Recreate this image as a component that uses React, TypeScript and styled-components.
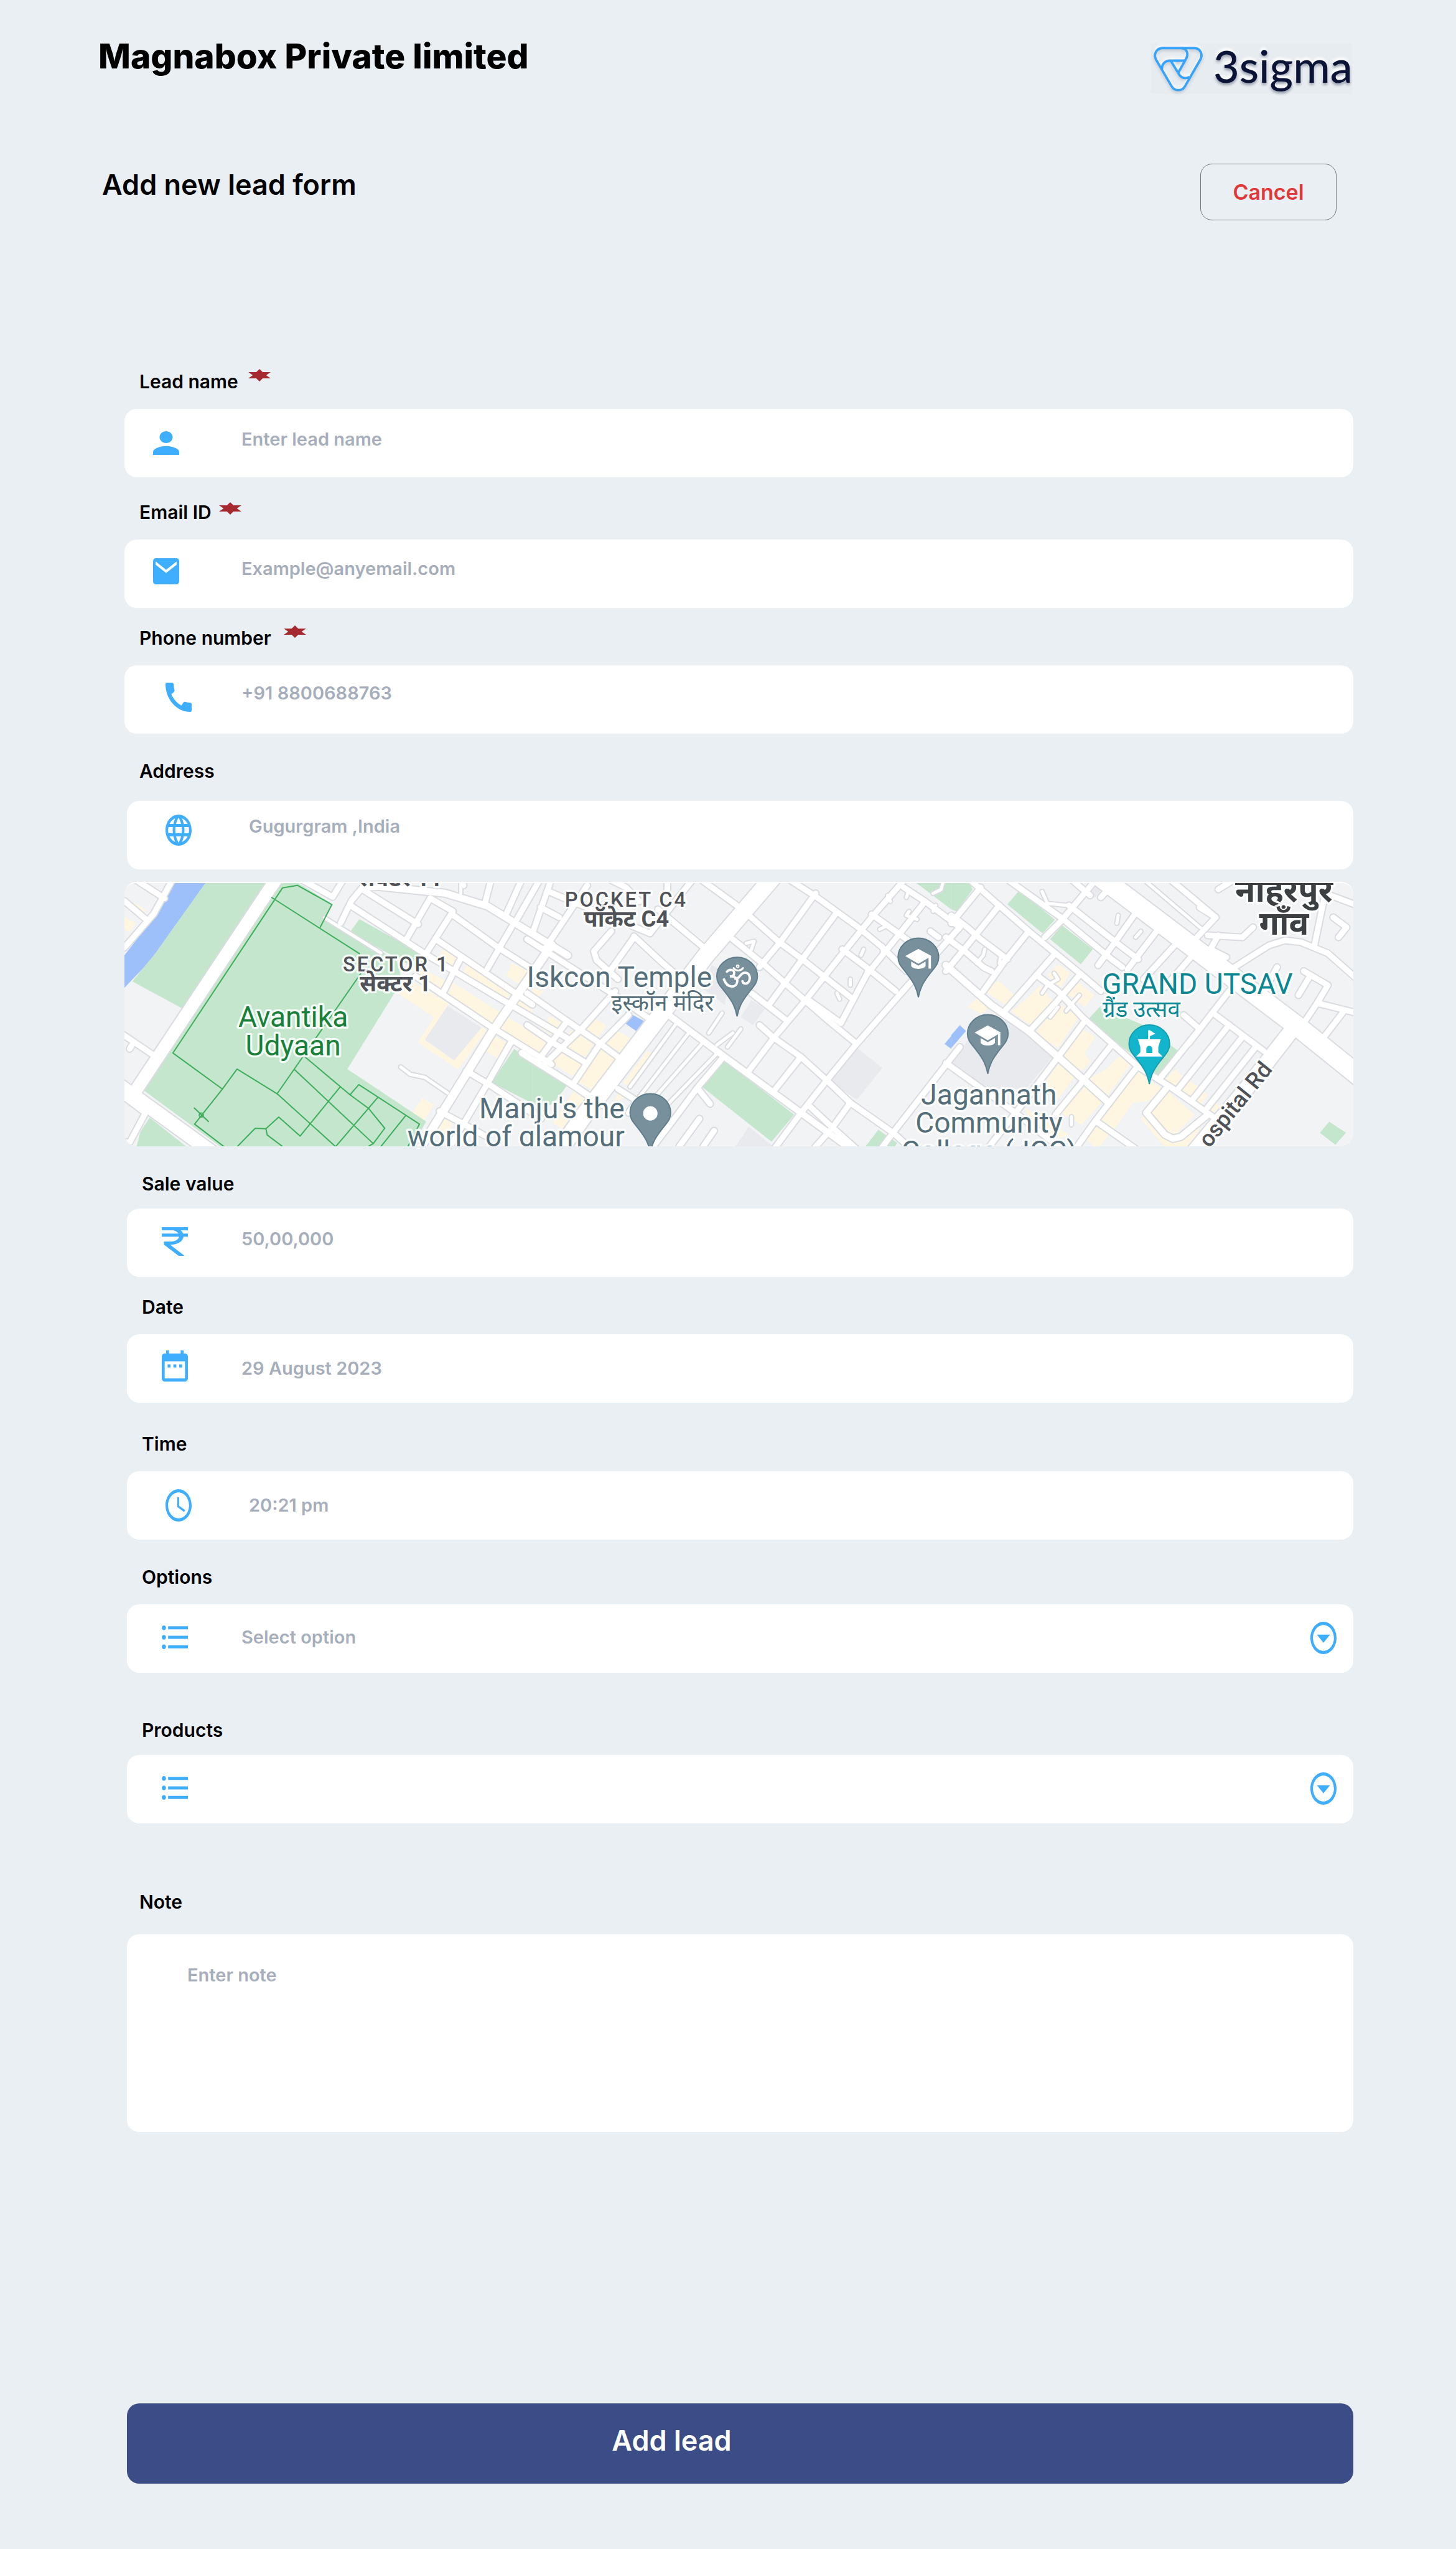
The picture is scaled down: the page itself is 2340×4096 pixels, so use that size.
import React from 'react';
import styled, { createGlobalStyle } from 'styled-components';

const GlobalStyle = createGlobalStyle`
  *, *::before, *::after { box-sizing: border-box; }
  body {
    margin: 0;
    background: #eaeff3;
    color: #000;
    font-family: Inter, "Noto Sans", sans-serif;
  }
`;

/* ---------- page ---------- */

const Page = styled.main`
  min-height: 100vh;
  display: flex;
  flex-direction: column;
  padding-bottom: 104px;
  background: #eaeff3;
`;

const Header = styled.header`
  display: flex;
  justify-content: space-between;
  align-items: flex-start;
  padding: 54px 167px 0 158px;
`;

const Company = styled.h1`
  margin: 0;
  font-size: 55px;
  line-height: 72px;
  font-weight: 800;
`;

const Logo = styled.div`
  display: flex;
  align-items: flex-start;
  gap: 17px;
  width: 323px;
  height: 81px;
  margin-top: 16px;
  padding-left: 4px;
  background: #e7ecf0;
`;

const LogoMark = styled.svg`
  flex: none;
  width: 79px;
  height: 74px;
  margin-top: 4px;
  overflow: visible;
  filter: drop-shadow(0 -4px 2px #fff) drop-shadow(0 3px 2px rgba(40, 50, 80, 0.18));
`;

const LogoText = styled.span`
  font-family: Lato, sans-serif;
  font-weight: 500;
  font-size: 72px;
  line-height: 70px;
  color: #0b1437;
  text-shadow: -1px -4px 4px #fff, 0 3px 4px rgba(11, 20, 55, 0.4);
`;

const TitleRow = styled.div`
  display: flex;
  justify-content: space-between;
  align-items: flex-start;
  padding: 112px 192px 0 164px;
`;

const FormTitle = styled.h2`
  margin: 0;
  padding-top: 4px;
  font-size: 45px;
  line-height: 60px;
  font-weight: 600;
`;

const CancelButton = styled.button`
  width: 219px;
  height: 91px;
  border: 1px solid #76777a;
  border-radius: 19px;
  background: transparent;
  color: #e03838;
  font: 600 34px/44px Inter, sans-serif;
`;

const Form = styled.form`
  display: flex;
  flex-direction: column;
  padding: 243px 165px 0 200px;
`;

/* ---------- fields ---------- */

const Field = styled.div<{ $before: number; $inset?: boolean }>`
  margin-top: ${(p) => p.$before}px;
  margin-left: ${(p) => (p.$inset ? 4 : 0)}px;
`;

const Label = styled.label<{ $gap: number; $indent: number }>`
  display: flex;
  align-items: flex-start;
  width: fit-content;
  margin-bottom: ${(p) => p.$gap}px;
  padding-left: ${(p) => p.$indent}px;
  font-size: 30px;
  line-height: 32px;
  font-weight: 600;
`;

const Star = styled.svg<{ $gap: number; $lift: number }>`
  width: 36px;
  height: 20px;
  margin: ${(p) => -p.$lift}px 0 0 ${(p) => p.$gap}px;
`;

const Box = styled.div`
  position: relative;
  display: flex;
  height: 110px;
  border-radius: 20px;
  background: #fff;
  overflow: hidden;
`;

const IconSlot = styled.span<{ $left: number; $width: number; $lift: number }>`
  flex: 0 0 ${(p) => p.$width}px;
  display: flex;
  align-items: center;
  padding-left: ${(p) => p.$left}px;
  padding-bottom: ${(p) => p.$lift}px;
`;

const Glyph = styled.svg<{ $h: number }>`
  display: block;
  width: 42px;
  height: ${(p) => p.$h}px;
  fill: #40aeff;
`;

const Input = styled.input<{ $lift: number }>`
  flex: 1;
  min-width: 0;
  border: 0;
  outline: 0;
  background: transparent;
  padding: 0 24px ${(p) => p.$lift}px 0;
  color: #3b4252;
  font: 600 29px/36px Inter, sans-serif;
  &::placeholder { color: #a7aebb; opacity: 1; }
`;

const Select = styled.select<{ $lift: number }>`
  flex: 1;
  min-width: 0;
  appearance: none;
  border: 0;
  outline: 0;
  background: transparent;
  padding: 0 96px ${(p) => p.$lift}px 0;
  color: #a7aebb;
  font: 600 29px/36px Inter, sans-serif;
`;

const Arrow = styled.span`
  position: absolute;
  top: 28px;
  right: 27px;
  pointer-events: none;
`;

const Note = styled.textarea`
  display: block;
  width: 100%;
  height: 318px;
  border: 0;
  outline: 0;
  resize: none;
  border-radius: 20px;
  background: #fff;
  padding: 48px 97px;
  font: 600 29px/36px Inter, sans-serif;
  &::placeholder { color: #a7aebb; opacity: 1; }
`;

const Submit = styled.button`
  height: 129px;
  margin: 436px 0 0 4px;
  padding: 0 220px 10px 0;
  border: 0;
  border-radius: 20px;
  background: #3c4c86;
  color: #fff;
  font: 600 45px/60px Inter, sans-serif;
`;

/* ---------- icons ---------- */

type IconDef = { box: string; h: number; d: string };

const icons: Record<string, IconDef> = {
  person: {
    box: '4 4 16 16',
    h: 38,
    d: 'M12 12c2.21 0 4-1.79 4-4s-1.79-4-4-4-4 1.79-4 4 1.79 4 4 4zm0 2c-2.67 0-8 1.34-8 4v2h16v-2c0-2.66-5.33-4-8-4z',
  },
  mail: {
    box: '2 4 20 16',
    h: 42,
    d: 'M20 4H4c-1.1 0-1.99.9-1.99 2L2 18c0 1.1.9 2 2 2h16c1.1 0 2-.9 2-2V6c0-1.1-.9-2-2-2zm0 4l-8 5-8-5V6l8 5 8-5v2z',
  },
  phone: {
    box: '3 3 18 18',
    h: 47,
    d: 'M20.01 15.38c-1.23 0-2.42-.2-3.53-.56-.35-.12-.74-.03-1.01.24l-1.57 1.97c-2.83-1.35-5.48-3.9-6.89-6.83l1.95-1.66c.27-.28.35-.67.24-1.02-.37-1.11-.56-2.3-.56-3.53 0-.54-.45-.99-.99-.99H4.19C3.65 3 3 3.24 3 3.99 3 13.28 10.73 21 20.01 21c.71 0 .99-.63.99-1.18v-3.45c0-.54-.45-.99-.99-.99z',
  },
  globe: {
    box: '2 2 20 20',
    h: 50,
    d: 'M11.99 2C6.47 2 2 6.48 2 12s4.47 10 9.99 10C17.52 22 22 17.52 22 12S17.52 2 11.99 2zm6.93 6h-2.95c-.32-1.25-.78-2.45-1.38-3.56 1.84.63 3.37 1.91 4.33 3.56zM12 4.04c.83 1.2 1.48 2.53 1.91 3.96h-3.82c.43-1.43 1.08-2.76 1.91-3.96zM4.26 14C4.1 13.36 4 12.69 4 12s.1-1.36.26-2h3.38c-.08.66-.14 1.32-.14 2 0 .68.06 1.34.14 2H4.26zm.82 2h2.95c.32 1.25.78 2.45 1.38 3.56-1.84-.63-3.37-1.9-4.33-3.56zm2.95-8H5.08c.96-1.66 2.49-2.93 4.33-3.56C8.81 5.55 8.35 6.75 8.03 8zM12 19.96c-.83-1.2-1.48-2.53-1.91-3.96h3.82c-.43 1.43-1.08 2.76-1.91 3.96zM14.34 14H9.66c-.09-.66-.16-1.32-.16-2 0-.68.07-1.35.16-2h4.68c.09.65.16 1.32.16 2 0 .68-.07 1.34-.16 2zm.25 5.56c.6-1.11 1.06-2.31 1.38-3.56h2.95c-.96 1.65-2.49 2.93-4.33 3.56zM16.36 14c.08-.66.14-1.32.14-2 0-.68-.06-1.34-.14-2h3.38c.16.64.26 1.31.26 2s-.1 1.36-.26 2h-3.38z',
  },
  rupee: {
    box: '6 3 12 18',
    h: 46,
    d: 'M13.66 7c-.56-1.18-1.76-2-3.16-2H6V3h12v2h-3.26c.48.58.84 1.26 1.05 2H18v2h-2.02c-.25 2.8-2.61 5-5.48 5h-.73l6.73 7h-2.77L7 14v-2h3.5c1.76 0 3.22-1.3 3.46-3H6V7h7.66z',
  },
  calendar: {
    box: '3 2 18 20',
    h: 50,
    d: 'M9 11H7v2h2v-2zm4 0h-2v2h2v-2zm4 0h-2v2h2v-2zm2-7h-1V2h-2v2H8V2H6v2H5c-1.11 0-1.99.9-1.99 2L3 20c0 1.1.89 2 2 2h14c1.1 0 2-.9 2-2V6c0-1.1-.9-2-2-2zm0 16H5V9h14v11z',
  },
  clock: {
    box: '2 2 20 20',
    h: 52,
    d: 'M11.99 2C6.47 2 2 6.48 2 12s4.47 10 9.99 10C17.52 22 22 17.52 22 12S17.52 2 11.99 2zM12 20c-4.42 0-8-3.58-8-8s3.58-8 8-8 8 3.58 8 8-3.58 8-8 8zm.5-13H11v6l5.25 3.15.75-1.23-4.5-2.67z',
  },
  list: {
    box: '2.5 4.5 18.5 15',
    h: 38,
    d: 'M4 10.5c-.83 0-1.5.67-1.5 1.5s.67 1.5 1.5 1.5 1.5-.67 1.5-1.5-.67-1.5-1.5-1.5zm0-6c-.83 0-1.5.67-1.5 1.5S3.17 7.5 4 7.5 5.5 6.83 5.5 6 4.83 4.5 4 4.5zm0 12c-.83 0-1.5.68-1.5 1.5s.68 1.5 1.5 1.5 1.5-.68 1.5-1.5-.67-1.5-1.5-1.5zM7 19h14v-2H7v2zm0-6h14v-2H7v2zm0-8v2h14V5H7z',
  },
  dropdown: {
    box: '2 2 20 20',
    h: 52,
    d: 'M12 4c4.41 0 8 3.59 8 8s-3.59 8-8 8-8-3.59-8-8 3.59-8 8-8m0-2C6.48 2 2 6.48 2 12s4.48 10 10 10 10-4.48 10-10S17.52 2 12 2zM7 10h10l-5 5z',
  },
};

const Icon = ({ name }: { name: string }) => {
  const icon = icons[name];
  return (
    <Glyph $h={icon.h} viewBox={icon.box} preserveAspectRatio="none" aria-hidden="true">
      <path d={icon.d} />
    </Glyph>
  );
};

const Required = ({ gap, lift }: { gap: number; lift: number }) => (
  <Star $gap={gap} $lift={lift} viewBox="0 0 84 48" preserveAspectRatio="none" role="img" aria-label="required">
    <path fill="#a42a2f" d="M42 0L54 12L84 12L67 24L84 36L54 36L42 48L30 36L0 36L17 24L0 12L30 12Z" />
  </Star>
);

/* ---------- map ---------- */

const MapFrame = styled.div`
  height: 425px;
  margin-top: 20px;
  border-top: 2px solid #fff;
  border-radius: 20px;
  overflow: hidden;
`;

const MapSvg = styled.svg`
  display: block;
  width: 100%;
  height: 423px;
  background: #f1f3f4;

  text {
    font-family: Roboto, "Noto Sans", sans-serif;
    font-size: 48px;
    paint-order: stroke;
    stroke: #fff;
    stroke-opacity: 0.85;
    stroke-width: 7px;
    stroke-linejoin: round;
  }
  .small { font-size: 38px; }
  .area { font-size: 34px; letter-spacing: 3px; }
  .village { font-size: 55px; }
`;

const Road = styled.polyline<{ $w: number; $c: string }>`
  fill: none;
  stroke: ${(p) => p.$c};
  stroke-width: ${(p) => p.$w}px;
  stroke-linejoin: round;
  stroke-linecap: round;
  vector-effect: non-scaling-stroke;
`;

type Tile = {
  at: string;
  green: string[];
  blue: string[];
  grey: string[];
  yellow: string[];
  roads: string[];
  lanes: string[];
  major: [number, string][];
};

const tiles: Tile[] = [
  {
    at: 'translate(190 1250) scale(0.4464 0.4337)',
    green: [
      '340,500 595,500 258,1005 70,900 150,800',
      '640,500 690,521 815,600 790,655 1060,820 1080,900 1045,955 875,1238 1170,1440 1105,1560 430,1560 110,1318',
      '920,660 1190,815 1130,850 885,710',
      '135,1425 300,1560 80,1560 100,1480',
      '1500,1160 1568,1210 1568,1370 1415,1290',
    ],
    blue: ['240,500 358,500 150,800 110,850 40,925 40,800 160,640'],
    grey: ['1250,995 1380,1080 1300,1190 1265,1215 1160,1130'],
    yellow: [
      '75,595 120,625 105,650 60,620',
      '40,650 82,675 60,710 40,700',
      '1240,770 1300,810 1270,870 1200,830',
      '1330,820 1500,920 1460,990 1295,890',
      '1270,905 1450,1020 1420,1085 1250,960',
      '1150,850 1250,900 1225,935 1140,890',
      '1085,880 1255,985 1165,1125 1275,1205 1380,1075 1395,1090 1290,1240 1140,1135 1200,1040 1070,950',
      '1490,830 1550,860 1520,910 1470,880',
      '1510,935 1568,970 1568,1030 1485,1000',
      '1470,1035 1568,1095 1568,1170 1440,1100',
      '1425,1110 1475,1140 1440,1200 1390,1165',
      '1155,1350 1200,1375 1160,1440 1120,1405',
      '1220,1420 1270,1450 1240,1500 1190,1480',
    ],
    roads: [
      '235,480 150,640 40,770',
      '40,590 120,660',
      '70,500 190,580',
      '20,1095 150,1185',
      '60,1160 75,1135',
      '120,1405 60,1520 20,1520',
      '110,1400 20,1330',
      '690,500 820,575 870,490',
      '850,675 890,590 930,540 1020,535',
      '930,545 1140,680',
      '890,610 1160,790 1420,950 1700,1120',
      '1185,580 1095,740',
      '1185,580 1270,630 1165,800',
      '1265,640 1440,770 1640,900',
      '1210,740 1568,990',
      '1490,690 1400,850',
      '1300,810 1235,940',
      '1310,530 1290,490',
      '1390,600 1420,480',
      '1470,640 1540,480',
      '1510,660 1600,500',
      '1130,880 1420,1080 1640,1220',
      '1320,1245 1410,1300 1600,1430',
      '1220,1400 1400,1500',
      '1490,1130 1390,1310 1260,1536',
    ],
    lanes: ['1075,1230 1110,1258 1165,1270 1250,1330', '790,655 1000,790', '1300,560 1300,500'],
    major: [
      [20, '625,480 80,1325'],
      [22, '20,1300 370,1560'],
      [11, '1000,535 1240,560 1400,610 1700,800'],
      [13, '1640,760 1420,1090 1150,1540'],
    ],
  },
  {
    at: 'translate(890 1450) scale(0.4464 0.3333)',
    green: [
      '715,965 980,1240 895,1375 635,1100',
      '1420,60 1568,60 1568,210',
      '1295,1315 1365,1380 1350,1420 1235,1420',
      '0,975 128,1095 80,1180 0,1240',
    ],
    blue: ['350,722 418,770 388,820 330,765', '1568,845 1543,885 1568,910'],
    grey: [
      '1215,905 1310,1005 1215,1165 1110,1070',
      '670,490 740,530 720,690 640,610',
      '820,665 870,710 825,790 780,750',
      '810,1300 900,1398 760,1398',
    ],
    yellow: [
      '65,745 115,785 85,850 30,805',
      '225,745 278,795 245,850 195,800',
      '310,812 370,860 338,935 272,880',
      '145,815 228,885 198,950 108,880',
      '0,835 68,890 38,950 0,920',
      '95,918 185,990 155,1048 62,975',
      '260,912 318,960 230,1120 172,1075',
      '430,920 448,935 358,1095 340,1080',
      '155,1120 195,1160 110,1310 75,1280',
      '325,1120 345,1150 300,1190',
      '0,605 40,620 20,650 0,635',
    ],
    roads: [
      '620,50 780,205',
      '950,50 1060,145 1220,300 1310,400 1400,520',
      '810,240 920,370 1010,460 1095,550 1200,660',
      '750,360 870,490 950,585 1110,770 1210,880',
      '820,630 945,760',
      '850,790 900,850 1005,950 1100,1065 1190,1180 1350,1330 1400,1390',
      '1270,235 1370,330 1440,400',
      '1390,100 1470,170 1600,300',
      '1160,410 1250,500 1360,620',
      '1040,670 1155,780',
      '1060,130 930,370 850,500',
      '1140,225 1010,460 890,680',
      '1400,50 1270,250 1150,450 1020,670 900,860 810,1020',
      '1470,170 1370,340 1250,540 1155,780',
      '1005,950 910,1110',
      '1600,300 1400,600 1210,890 1100,1070 1000,1240 900,1420',
      '1190,1180 1120,1310 1060,1400',
      '1040,1200 1120,1300 1220,1420',
      '1600,900 1350,1330 1300,1420',
      '715,950 620,1100 520,1280 440,1420',
      '620,1110 665,1185',
      '625,1260 550,1398',
      '680,1320 640,1398',
      '70,60 0,330',
      '205,90 50,400',
      '60,120 130,160 440,330',
      '30,200 100,250',
      '-20,360 50,420 190,540 320,650 450,770',
      '380,345 480,470 600,610',
      '295,320 230,420 240,465 320,560',
      '600,60 440,330',
      '470,210 640,400',
      '380,350 290,520',
      '-20,630 130,770 240,870 340,970',
      '-20,790 90,890 200,980',
      '310,620 190,800 50,980',
      '130,770 20,970',
      '360,740 250,890 150,1090',
      '320,1110 390,1170 360,1230',
      '1490,320 1520,350',
      '290,60 350,100 400,170',
      '505,60 505,110',
    ],
    lanes: [
      '545,770 365,1100',
      '590,820 400,1150',
      '640,875 440,1180',
      '700,920 490,1210',
      '750,830 690,890',
      '780,810 730,900',
      '710,730 660,830',
      '800,380 830,370 820,410',
      '1300,310 1330,290',
      '1230,440 1240,410',
      '1190,590 1190,560',
      '1150,660 1140,630',
      '1250,550 1250,520',
      '1310,420 1310,390',
      '1410,220 1400,240 1440,260',
      '1400,150 1410,110',
      '1340,170 1330,140',
      '1500,220 1510,190',
      '1540,60 1530,110 1500,130',
    ],
    major: [
      [27, '900,50 650,440 200,1230 100,1420'],
      [10, '510,740 720,950 1000,1225 1220,1440'],
      [10, '-40,930 150,1090 260,1190'],
    ],
  },
  {
    at: 'translate(1590 1450) scale(0.4464 0.3333)',
    green: [
      '0,60 60,60 80,110 20,220 0,210',
      '255,115 388,262 342,330 210,185',
      '415,290 530,410 485,485 370,360',
      '555,700 720,790 850,920 775,1040 510,765',
      '1415,1275 1478,1330 1438,1390 1380,1330',
    ],
    blue: ['32,790 55,820 0,905 0,840'],
    grey: ['215,760 382,945 280,1110 140,1110 0,985 80,830', '540,80 570,100 540,150 520,120'],
    yellow: [
      '175,565 235,640 205,690 130,625',
      '400,485 445,530 410,600 360,540',
      '335,590 365,650 380,670 295,790 225,720 280,660',
      '100,650 145,695 115,735 60,700',
      '470,570 535,640 500,700 430,630',
      '400,680 480,745 400,905 315,830',
      '490,810 540,850 500,930 520,975 490,1020 415,955',
      '400,985 465,1045 395,1170 345,1090',
      '630,945 670,990 575,1160 515,1060 580,1010',
      '695,1020 790,1110 740,1170 680,1180 605,1320 555,1250',
      '500,1100 570,1165 490,1290 410,1230',
      '840,1010 865,1050 835,1100 800,1065',
      '890,1065 960,1140 925,1210 850,1130',
      '980,1170 1010,1200 970,1240 950,1225',
      '810,1120 910,1240 835,1345 745,1250',
      '735,1180 710,1260 810,1420 885,1420 940,1280 840,1370',
      '270,1200 440,1340 400,1360 300,1280',
      '545,1285 590,1340 545,1420 500,1350',
    ],
    roads: [
      '60,50 170,180 290,320 390,430 490,540 560,620',
      '-20,350 60,430 120,500 150,520',
      '0,240 60,300 110,360 210,460',
      '320,540 400,620 490,750 600,880 700,1000 820,1100 980,1250',
      '200,50 410,250 600,460 640,500',
      '440,190 640,400 700,460',
      '110,100 0,280',
      '180,190 60,390 -20,520',
      '290,320 200,470 120,620',
      '530,80 410,270 350,350',
      '390,430 200,720',
      '480,540 390,680 300,810',
      '700,210 610,380 550,490',
      '780,300 660,510',
      '850,370 720,560',
      '910,430 800,600',
      '500,770 400,950 270,1180 130,1420',
      '600,890 500,1060 390,1240',
      '690,1010 540,1270 460,1420',
      '-20,980 250,1240 420,1420',
      '540,1270 700,1420',
      '870,740 930,810 780,1060',
      '1040,620 890,880',
      '990,740 1170,920',
      '1040,790 850,1110',
      '1090,850 900,1170',
      '1140,900 950,1220',
      '450,60 520,140',
      '820,60 990,250 920,350',
      '1000,110 1060,60',
      '990,250 930,200',
      '960,340 1090,350 1130,300',
      '1000,340 970,410 1030,450',
      '1060,500 1190,390 1250,365 1310,375 1410,430 1520,560',
      '1360,390 1400,130 1520,190',
      '1320,520 1410,590 1370,680 1520,730',
      '1380,660 1310,800',
      '1345,540 1300,640',
      '1220,500 1170,620',
      '1470,720 1390,860',
      '1430,250 1480,300 1450,350',
      '620,60 560,150',
    ],
    lanes: [
      '95,480 120,440 125,410',
      '180,480 185,440',
      '340,630 360,590 400,560 385,530',
      '430,720 460,670 480,640',
      '370,750 400,700',
      '620,280 625,240',
      '690,350 710,320',
      '450,1250 450,1290',
      '340,120 360,180 430,190',
      '720,60 940,310',
    ],
    major: [
      [31, '560,50 1290,790 1540,1060'],
      [24, '1290,790 1110,1100 900,1440'],
      [11, '-20,490 150,690 290,820 400,950 500,1070 590,1180'],
      [10, '810,1100 730,1230 800,1340 830,1360 860,1350 960,1240'],
    ],
  },
];

const parkPaths = [
  '688,530 632,540 222,1176 407,1315 462,1238 612,1333 845,1550',
  '592,577 920,793',
  '688,530 817,604 773,692',
  '925,870 612,1333',
  '715,1190 885,1337 918,1298 1145,1450 1095,1550',
  '407,1315 303,1450 430,1550',
  '302,1388 355,1440',
  '677,1240 972,1525',
  '848,1307 698,1496 618,1423 570,1468 575,1492 650,1550',
  '570,1468 530,1466 450,1550',
  '885,1337 955,1390 1015,1466 972,1525 930,1550',
  '990,1346 820,1550',
  '1093,1418 990,1550',
];

const PIN = 'M0 0C-3 -16 -8 -25 -18 -38C-28 -51 -34 -56 -34 -67A34 32 0 0 1 34 -67C34 -56 28 -51 18 -38C8 -25 3 -16 0 0Z';

const Pin = ({ x, y, teal, children }: { x: number; y: number; teal?: boolean; children: React.ReactNode }) => (
  <g transform={`translate(${x} ${y})`}>
    <path d={PIN} fill={teal ? '#12b5cb' : '#78909c'} stroke={teal ? '#129eaf' : '#607d8b'} strokeWidth="2" />
    <g transform="translate(0 -66)">{children}</g>
  </g>
);

const Cap = () => (
  <g fill="#fff">
    <path d="M0 -15L-22 -3L0 10L22 -3Z" />
    <path d="M-12 6V14C-8 20 8 20 12 14V6L0 13Z" />
    <path d="M17 -2H21V18H17Z" />
  </g>
);

const Om = () => (
  <g fill="none" stroke="#fff" strokeWidth="4" strokeLinecap="round">
    <path d="M-17 -9C-12 -14 -4 -12 -5 -6C-5 -2 -9 -1 -12 -1C-4 -2 2 3 0 9C-2 18 -16 20 -22 4" />
    <path d="M-3 3C4 4 5 -6 12 -7C20 -8 23 0 20 7C17 13 10 12 9 7" />
    <path d="M-6 -15C-1 -9 6 -10 10 -15" strokeWidth="3" />
    <circle cx="1" cy="-18" r="1" />
  </g>
);

const Castle = () => (
  <g fill="#fff">
    <path d="M-2 -24H1L10 -18L1 -14V-9H-2Z" />
    <path d="M-19 -9H19L15 4V13L22 20H-22L-15 13V4Z" />
    <path d="M-5 14V7A5 5 0 0 1 5 7V14Z" fill="#12b5cb" />
  </g>
);

const CityMap = () => (
  <MapFrame>
    <MapSvg viewBox="208 1476 2054 440" preserveAspectRatio="xMidYMid slice" role="img" aria-label="Map of the address">
      {tiles.map((t) => (
        <g key={t.at} transform={t.at}>
          {t.grey.map((p) => <polygon key={p} points={p} fill="#e8eaed" />)}
          {t.yellow.map((p) => <polygon key={p} points={p} fill="#fef6e0" />)}
          {t.green.map((p) => <polygon key={p} points={p} fill="#c3e6cd" />)}
          {t.blue.map((p) => <polygon key={p} points={p} fill="#9dc0fa" />)}
        </g>
      ))}
      {tiles.map((t) => (
        <g key={t.at} transform={t.at}>
          {t.lanes.map((p) => <Road key={p} points={p} $w={9} $c="#dadce0" />)}
          {t.roads.map((p) => <Road key={p} points={p} $w={13} $c="#dadce0" />)}
          {t.major.map(([w, p]) => <Road key={p} points={p} $w={w + 4} $c="#dadce0" />)}
        </g>
      ))}
      {tiles.map((t) => (
        <g key={t.at} transform={t.at}>
          {t.lanes.map((p) => <Road key={p} points={p} $w={5} $c="#fff" />)}
          {t.roads.map((p) => <Road key={p} points={p} $w={9} $c="#fff" />)}
          {t.major.map(([w, p]) => <Road key={p} points={p} $w={w} $c="#fff" />)}
        </g>
      ))}
      <g transform={tiles[0].at}>
        {parkPaths.map((p) => <Road key={p} points={p} $w={2} $c="#3fae5c" />)}
        <circle cx="328" cy="1415" r="8" fill="none" stroke="#3fae5c" strokeWidth="4" />
      </g>

      <g fill="#4f5257" fontWeight="500">
        <text className="area" x="944" y="1516">POCKET C4</text>
        <text className="area" x="573" y="1624">SECTOR 1</text>
        <text className="small" x="2128" y="1788" textAnchor="end" transform="rotate(-51 2128 1788)">ospital Rd</text>
      </g>
      <g fill="#4f5257" fontWeight="700" textAnchor="middle">
        <text className="small" x="1047" y="1549">पॉकेट C4</text>
        <text className="small" x="661" y="1657">सेक्टर 1</text>
        <text className="small" x="669" y="1481">सेक्टर 11</text>
      </g>
      <g fill="#188038" textAnchor="middle">
        <text x="490" y="1716">Avantika</text>
        <text x="490" y="1764">Udyaan</text>
      </g>
      <g fill="#546e7a" textAnchor="end">
        <text x="1190" y="1650">Iskcon Temple</text>
        <text className="small" x="1193" y="1689">इस्कॉन मंदिर</text>
        <text x="1044" y="1869">Manju's the</text>
        <text x="1044" y="1916">world of glamour</text>
      </g>
      <g fill="#546e7a" textAnchor="middle">
        <text x="1653" y="1846">Jagannath</text>
        <text x="1653" y="1893">Community</text>
        <text x="1653" y="1941">College (JCC)</text>
      </g>
      <g fill="#0b8793">
        <text x="1842" y="1661">GRAND UTSAV</text>
        <text className="small" x="1843" y="1700">ग्रैंड उत्सव</text>
      </g>
      <g fill="#3c4043" textAnchor="middle" fontWeight="700">
        <text className="village" x="2146" y="1507">नाहरपुर</text>
        <text className="village" x="2146" y="1562">गाँव</text>
      </g>

      <Pin x={1232} y={1699}><Om /></Pin>
      <Pin x={1535} y={1667}><Cap /></Pin>
      <Pin x={1651} y={1795}><Cap /></Pin>
      <Pin x={1921} y={1812} teal><Castle /></Pin>
      <Pin x={1087} y={1927}><circle r="12" fill="#fff" /></Pin>
    </MapSvg>
  </MapFrame>
);

/* ---------- form data ---------- */

type FieldDef = {
  id: string;
  label: string;
  icon: string;
  text: string;
  before: number;
  gap: number;
  indent: number;
  iconLeft: number;
  textLeft: number;
  iconLift: number;
  textLift: number;
  star?: { gap: number; lift: number };
  inset?: boolean;
  select?: boolean;
};

const contactFields: FieldDef[] = [
  { id: 'lead', label: 'Lead name', icon: 'person', text: 'Enter lead name', before: 0, gap: 28, indent: 24, iconLeft: 46, textLeft: 188, iconLift: 0, textLift: 12, star: { gap: 16, lift: 4 } },
  { id: 'email', label: 'Email ID', icon: 'mail', text: 'Example@anyemail.com', before: 40, gap: 28, indent: 24, iconLeft: 46, textLeft: 188, iconLift: 8, textLift: 16, star: { gap: 12, lift: 0 } },
  { id: 'phone', label: 'Phone number', icon: 'phone', text: '+91 8800688763', before: 32, gap: 28, indent: 24, iconLeft: 66, textLeft: 188, iconLift: 8, textLift: 20, star: { gap: 20, lift: 4 } },
  { id: 'address', label: 'Address', icon: 'globe', text: 'Gugurgram ,India', before: 44, gap: 32, indent: 20, iconLeft: 62, textLeft: 196, iconLift: 16, textLift: 28, inset: true },
];

const saleFields: FieldDef[] = [
  { id: 'sale', label: 'Sale value', icon: 'rupee', text: '50,00,000', before: 44, gap: 24, indent: 24, iconLeft: 56, textLeft: 184, iconLift: 4, textLift: 12, inset: true },
  { id: 'date', label: 'Date', icon: 'calendar', text: '29 August 2023', before: 32, gap: 28, indent: 24, iconLeft: 56, textLeft: 184, iconLift: 8, textLift: 0, inset: true },
  { id: 'time', label: 'Time', icon: 'clock', text: '20:21 pm', before: 50, gap: 28, indent: 24, iconLeft: 62, textLeft: 196, iconLift: 0, textLift: 0, inset: true },
  { id: 'options', label: 'Options', icon: 'list', text: 'Select option', before: 44, gap: 28, indent: 24, iconLeft: 56, textLeft: 184, iconLift: 4, textLift: 4, inset: true, select: true },
  { id: 'products', label: 'Products', icon: 'list', text: '', before: 76, gap: 24, indent: 24, iconLeft: 56, textLeft: 184, iconLift: 4, textLift: 4, inset: true, select: true },
];

const FormField = ({ f }: { f: FieldDef }) => (
  <Field $before={f.before} $inset={f.inset}>
    <Label htmlFor={f.id} $gap={f.gap} $indent={f.indent}>
      {f.label}
      {f.star && <Required gap={f.star.gap} lift={f.star.lift} />}
    </Label>
    <Box>
      <IconSlot $left={f.iconLeft} $width={f.textLeft} $lift={f.iconLift}>
        <Icon name={f.icon} />
      </IconSlot>
      {f.select ? (
        <>
          <Select id={f.id} $lift={f.textLift} defaultValue="">
            <option value="">{f.text}</option>
          </Select>
          <Arrow><Icon name="dropdown" /></Arrow>
        </>
      ) : (
        <Input id={f.id} $lift={f.textLift} placeholder={f.text} />
      )}
    </Box>
  </Field>
);

export default function App() {
  return (
    <Page>
      <GlobalStyle />
      <Header>
        <Company>Magnabox Private limited</Company>
        <Logo>
          <LogoMark viewBox="145 112 246 228" fill="none" stroke="#38a3fb" strokeWidth="12" aria-hidden="true">
            <path d="M190 121H348C378 121 394 152 378 180L302 312C288 338 250 338 235 312L158 180C142 152 160 121 190 121Z" />
            <path d="M285 121C313 124 322 150 306 177L268 245" />
            <path d="M303 184H226C200 184 186 204 187 226" />
            <path d="M232 186L272 252C284 272 304 276 324 266" />
          </LogoMark>
          <LogoText>3sigma</LogoText>
        </Logo>
      </Header>
      <TitleRow>
        <FormTitle>Add new lead form</FormTitle>
        <CancelButton type="button">Cancel</CancelButton>
      </TitleRow>
      <Form onSubmit={(e) => e.preventDefault()}>
        {contactFields.map((f) => <FormField key={f.id} f={f} />)}
        <CityMap />
        {saleFields.map((f) => <FormField key={f.id} f={f} />)}
        <Field $before={110} $inset>
          <Label htmlFor="note" $gap={36} $indent={20}>Note</Label>
          <Note id="note" placeholder="Enter note" />
        </Field>
        <Submit type="submit">Add lead</Submit>
      </Form>
    </Page>
  );
}
